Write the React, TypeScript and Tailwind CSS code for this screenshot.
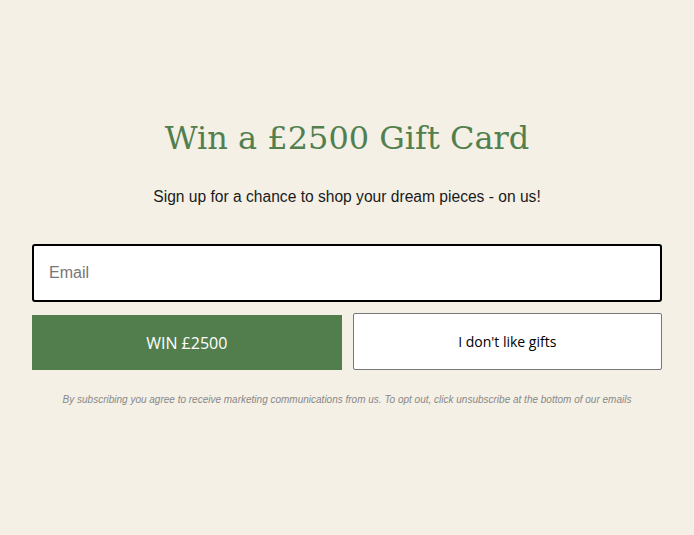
export default function App() {
  return (
    <div className="flex h-[535px] w-full flex-col items-center bg-[#f4f0e6] px-8 pt-[116px]">
      <h1 className="font-['Georgia','DejaVu_Serif',serif] text-[32px] leading-[44px] text-[#537f4e]">
        Win a £2500 Gift Card
      </h1>
      <p className="mt-[27px] font-['Liberation_Sans',Arial,sans-serif] text-[15.6px] leading-[20px] text-[#1a1a1a]">
        Sign up for a chance to shop your dream pieces - on us!
      </p>

      <div className="mt-[37px] w-full">
        <input
          type="email"
          placeholder="Email"
          className="h-[58px] w-full rounded-[3px] border-2 border-black bg-white px-[15px] font-['Liberation_Sans',Arial,sans-serif] text-[16px] text-black placeholder:text-[#777]"
        />
      </div>

      <div className="mt-[11px] grid w-full grid-cols-2 items-end gap-[11px]">
        <button className="h-[55px] bg-[#527e4d] font-['Open_Sans',sans-serif] text-[16px] font-medium text-white">
          WIN £2500
        </button>
        <button className="h-[57px] rounded-[2px] border border-[#777] bg-white font-['Open_Sans',sans-serif] text-[14px] text-black">
          I don't like gifts
        </button>
      </div>

      <p className="mt-[22px] font-['Liberation_Sans',Arial,sans-serif] text-[10px] italic text-[#888]">
        By subscribing you agree to receive marketing communications from us. To opt out, click unsubscribe at the bottom of our emails
      </p>
    </div>
  );
}
